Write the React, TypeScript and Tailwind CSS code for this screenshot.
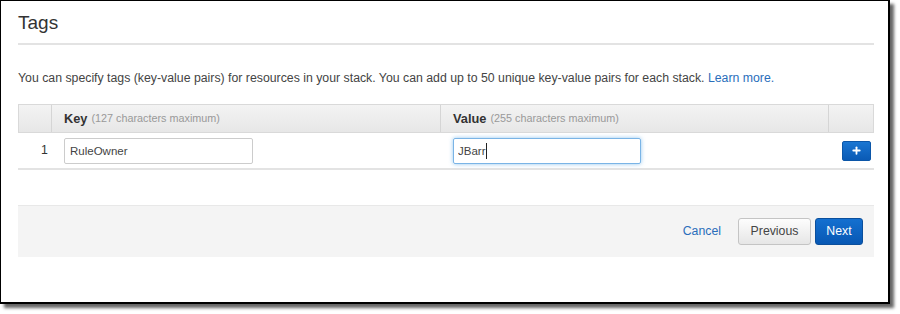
import { Plus } from "lucide-react"

export default function App() {
  return (
    <div className="w-[900px] h-[314px] bg-white" style={{ fontFamily: '"Liberation Sans", Arial, sans-serif' }}>
      <div className="w-[890px] h-[304px] border-l border-t border-r-2 border-b-2 border-black shadow-[4px_4px_3px_rgba(0,0,0,0.6)] pl-[17px] pr-[14px] pt-[11px] flex flex-col">
        <h2 className="text-[19px] leading-[22px] text-[#333] font-normal">Tags</h2>
        <div className="mt-[9px] h-[2px] bg-[#e3e3e3]" />

        <p className="mt-[24px] text-[12.3px] leading-[18px] text-[#444]">
          You can specify tags (key-value pairs) for resources in your stack. You can add up to 50 unique key-value pairs for each stack.{" "}
          <a className="text-[#2a6ebb]">Learn more.</a>
        </p>

        {/* tags table */}
        <div className="mt-[17px] text-[12.3px]">
          <div className="grid grid-cols-[33px_389px_388px_46px] h-[29px] border border-[#d9d9d9] bg-gradient-to-b from-[#f3f3f3] to-[#e7e7e7]">
            <div className="border-r border-[#d5d5d5]" />
            <div className="border-r border-[#d5d5d5] flex items-center pl-[12px]">
              <span className="font-bold text-[12.8px] text-[#333]">Key</span>
              <span className="ml-[4px] text-[10.8px] text-[#999]">(127 characters maximum)</span>
            </div>
            <div className="border-r border-[#d5d5d5] flex items-center pl-[12px]">
              <span className="font-bold text-[12.8px] text-[#333]">Value</span>
              <span className="ml-[4px] text-[10.8px] text-[#999]">(255 characters maximum)</span>
            </div>
            <div />
          </div>
          <div className="grid grid-cols-[33px_389px_388px_46px] h-[37px] border-b-2 border-[#e3e3e3] items-center">
            <div className="pl-[23px] text-[#333]">1</div>
            <div className="pl-[13px]">
              <input
                defaultValue="RuleOwner"
                className="w-[189px] h-[26px] border border-[#ccc] rounded-[2px] px-[5px] text-[11.5px] text-[#444] outline-none"
              />
            </div>
            <div className="pl-[13px]">
              <div className="relative w-[188px] h-[26px]">
                <input
                  defaultValue="JBarr"
                  className="w-[188px] h-[26px] border border-[#7ab4e6] rounded-[2px] px-[4px] text-[11.5px] text-[#444] outline-none shadow-[0_0_4px_rgba(102,175,233,0.7)]"
                />
                {/* text caret */}
                <span className="absolute left-[33px] top-[5px] w-px h-[16px] bg-[#222]" />
              </div>
            </div>
            <div className="flex justify-end pr-[3px]">
              <button className="w-[29px] h-[20px] rounded-[2px] border border-[#0b56a8] bg-gradient-to-b from-[#1a76d2] to-[#0a5ab5] flex items-center justify-center">
                <Plus className="w-[11px] h-[11px] text-white" strokeWidth={4} />
              </button>
            </div>
          </div>
        </div>

        {/* footer */}
        <div className="mt-[35px] h-[52px] bg-[#f4f4f4] border-t border-[#e8e8e8] flex items-center justify-end pr-[11px] text-[12.3px]">
          <a className="text-[#2a6ebb] mr-[17px]">Cancel</a>
          <button className="w-[73px] h-[27px] rounded-[3px] border border-[#c4c4c4] bg-gradient-to-b from-[#fdfdfd] to-[#e6e6e6] text-[#444]">
            Previous
          </button>
          <button className="ml-[4px] w-[48px] h-[27px] rounded-[3px] border border-[#0b4f9c] bg-gradient-to-b from-[#1470d0] to-[#0858b4] text-white">
            Next
          </button>
        </div>
      </div>
    </div>
  )
}
